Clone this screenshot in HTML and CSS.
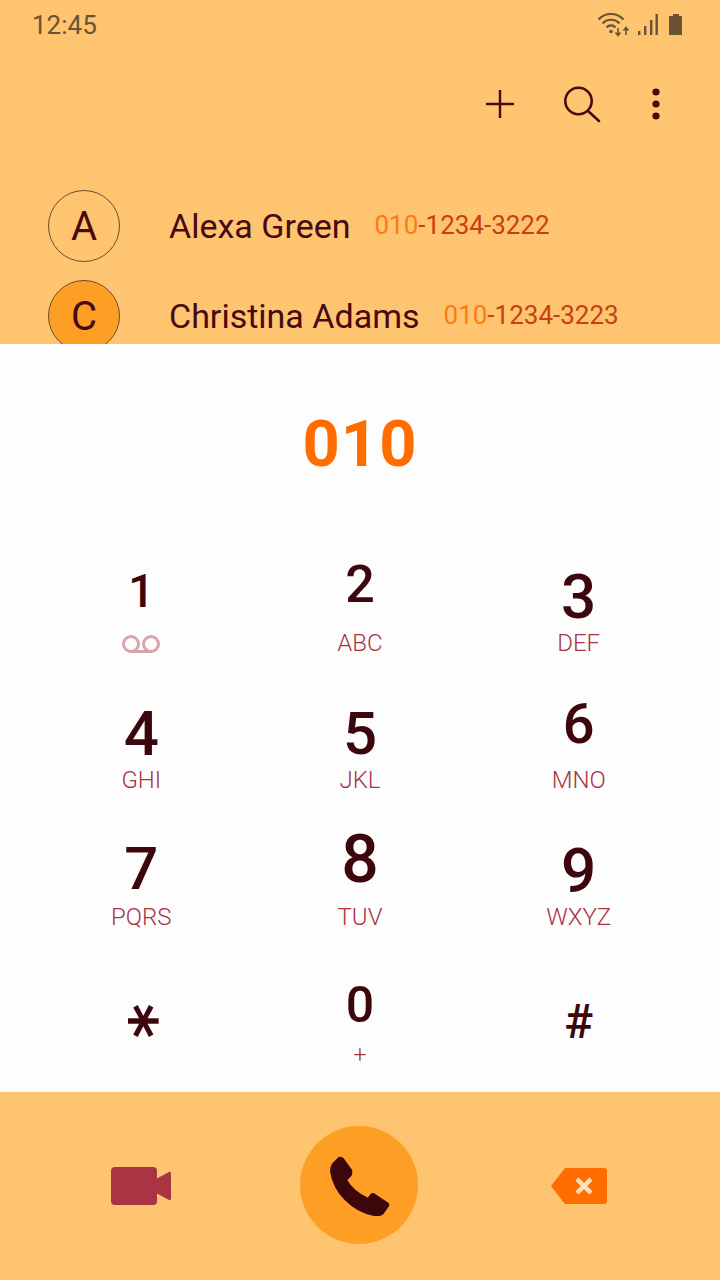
FILE: index.html
```html
<!DOCTYPE html>
<html lang="en">
<head>
    <meta charset="UTF-8">
    <meta name="viewport" content="width=device-width, initial-scale=1.0">
    <title>Phone</title>
    <link rel="stylesheet" href="styles.css">
</head>
<body>

    <div class="top">
        <div class="status-bar">
            <span class="time">12:45</span>
            <svg class="status-icons" width="92" height="28" viewBox="0 0 92 28">
                <g fill="none" stroke="#6b5234" stroke-width="2.2">
                    <path d="M3.5 8.5a17 17 0 0 1 25 0"/>
                    <path d="M7.5 12.5a11.5 11.5 0 0 1 17 0"/>
                    <path d="M11.5 16.5a6 6 0 0 1 9 0"/>
                    <path d="M23 17v7M20.5 21.5l2.5 3 2.5-3" stroke-width="1.6"/>
                    <path d="M31 24v-7M28.5 19.5l2.5-3 2.5 3" stroke-width="1.6"/>
                </g>
                <circle cx="16" cy="20.5" r="1.8" fill="#6b5234"/>
                <g fill="#6b5234">
                    <rect x="43" y="20" width="2.4" height="4"/>
                    <rect x="49" y="15" width="2.4" height="9"/>
                    <rect x="55" y="9" width="2.4" height="15"/>
                    <rect x="60.5" y="3" width="2.4" height="21"/>
                    <path d="M78 3h6v2h3v19H74V5h4z"/>
                </g>
            </svg>
        </div>

        <div class="toolbar">
            <svg class="tool" width="36" height="36" viewBox="0 0 36 36">
                <path d="M18 4v28M4 18h28" fill="none" stroke="#470a10" stroke-width="2.4"/>
            </svg>
            <svg class="tool tool-search" width="40" height="40" viewBox="0 0 40 40">
                <circle cx="16.5" cy="17" r="13.2" fill="none" stroke="#470a10" stroke-width="2.6"/>
                <path d="M26 27L37 37" fill="none" stroke="#470a10" stroke-width="2.6" stroke-linecap="round"/>
            </svg>
            <svg class="tool tool-more" width="12" height="36" viewBox="0 0 12 36">
                <circle cx="6" cy="6" r="3.6" fill="#470a10"/>
                <circle cx="6" cy="18" r="3.6" fill="#470a10"/>
                <circle cx="6" cy="30" r="3.6" fill="#470a10"/>
            </svg>
        </div>

        <div class="contact">
            <div class="avatar">A</div>
            <span class="name">Alexa Green</span>
            <span class="phone"><span class="match">010</span>-1234-3222</span>
        </div>
        <div class="contact">
            <div class="avatar avatar-on">C</div>
            <span class="name">Christina Adams</span>
            <span class="phone"><span class="match">010</span>-1234-3223</span>
        </div>
    </div>

    <div class="panel">
        <div class="dialed">010</div>
        <div class="keypad">
            <div class="key"><div class="num-box"><span class="num n1">1</span></div>
                <svg class="vm" width="38" height="18" viewBox="0 0 38 18">
                    <circle cx="9" cy="9" r="7.5" fill="none" stroke="#d9a3ab" stroke-width="3"/>
                    <circle cx="29" cy="9" r="7.5" fill="none" stroke="#d9a3ab" stroke-width="3"/>
                    <path d="M9 16.5h20" stroke="#d9a3ab" stroke-width="3"/>
                </svg>
            </div>
            <div class="key"><div class="num-box"><span class="num n2">2</span></div><span class="letters">ABC</span></div>
            <div class="key"><div class="num-box"><span class="num n3">3</span></div><span class="letters">DEF</span></div>
            <div class="key"><div class="num-box"><span class="num n4">4</span></div><span class="letters">GHI</span></div>
            <div class="key"><div class="num-box"><span class="num n5">5</span></div><span class="letters">JKL</span></div>
            <div class="key"><div class="num-box"><span class="num n6">6</span></div><span class="letters">MNO</span></div>
            <div class="key"><div class="num-box"><span class="num n7">7</span></div><span class="letters">PQRS</span></div>
            <div class="key"><div class="num-box"><span class="num n8">8</span></div><span class="letters">TUV</span></div>
            <div class="key"><div class="num-box"><span class="num n9">9</span></div><span class="letters">WXYZ</span></div>
            <div class="key"><div class="num-box"><span class="num star">*</span></div></div>
            <div class="key"><div class="num-box"><span class="num n0">0</span></div><span class="letters plus">+</span></div>
            <div class="key"><div class="num-box"><span class="num hash">#</span></div></div>
        </div>
    </div>

    <div class="bottom">
        <svg width="60" height="38" viewBox="0 0 60 38">
            <rect x="0" y="0" width="46" height="38" rx="4" fill="#aa3344"/>
            <path d="M45 12L58 5Q60 4 60 7V31Q60 34 58 33L45 26Z" fill="#aa3344"/>
        </svg>
        <div class="call">
            <svg class="handset" width="60" height="60" viewBox="0 0 60 60">
                <path d="M9 2Q11 1 13 3L21 14Q22 18 20 20L16 24Q23 36 38 43L41 39Q43 37 45 39L57 47Q59 48 58 50L53 57Q50 60 44 59C22 55 4 36 1 15Q1 11 3 8Z" fill="#3d060d" stroke="#3d060d" stroke-width="2" stroke-linejoin="round"/>
            </svg>
        </div>
        <svg width="56" height="36" viewBox="0 0 56 36">
            <path d="M14 0H53q3 0 3 3V33q0 3-3 3H14L0 18Z" fill="#ff6d00"/>
            <path d="M26 11l14 14M40 11L26 25" fill="none" stroke="#ffe3bf" stroke-width="4.5"/>
        </svg>
    </div>

</body>
</html>
```

FILE: styles.css
```css
body { margin: 0; width: 720px; height: 1280px; overflow: hidden; font-family: Roboto, sans-serif; background-color: #fec470; }

.top { height: 344px; overflow: hidden; background-color: #fec470; }

.status-bar { display: flex; justify-content: space-between; align-items: center; height: 50px; padding: 0 33px 0 32px; }
.time { font-size: 26px; color: #6b5234; }
.status-icons { display: block; }

.toolbar { display: flex; justify-content: flex-end; align-items: center; height: 108px; padding: 0 58px 0 0; margin-bottom: 23px; }
.tool { display: block; }
.tool-search { margin-left: 44px; }
.tool-more { margin-left: 48px; }

.contact { display: flex; align-items: center; height: 90px; padding-left: 48px; }
.avatar { flex: none; display: flex; align-items: center; justify-content: center; width: 70px; height: 70px; border: 1px solid #6b4b2e; border-radius: 50%; font-size: 40px; color: #470a10; margin-right: 49px; }
.avatar-on { background-color: #fe9f25; }
.name { font-size: 34px; color: #470a10; margin-right: 24px; }
.phone { font-size: 26px; color: #c93e12; margin-bottom: 2px; }
.match { color: #ff7a10; }

.panel { height: 748px; background-color: #fdfdfd; }
.dialed { height: 196px; padding-top: 65px; box-sizing: border-box; text-align: center; font-size: 65px; line-height: 70px; font-weight: 700; letter-spacing: 1px; color: #ff6d00; }

.keypad { display: grid; grid-template-columns: 1fr 1fr 1fr; grid-template-rows: 137px 137px 137px 141px; padding: 0 32px; }
.key { display: flex; flex-direction: column; align-items: center; }
.num-box { height: 88px; }
.num { display: block; line-height: 1; font-weight: 500; color: #3d060d; }
.letters { font-size: 24px; line-height: 30px; font-weight: 300; color: #aa3344; }
.plus { font-size: 23px; margin-top: 2px; }
.vm { margin-top: 7px; }

.n1 { font-size: 46px; margin-top: 28px; }
.n2 { font-size: 52px; margin-top: 19px; }
.n3 { font-size: 62px; margin-top: 26px; }
.n4 { font-size: 62px; margin-top: 26px; }
.n5 { font-size: 60px; margin-top: 27px; }
.n6 { font-size: 56px; margin-top: 19px; }
.n7 { font-size: 60px; margin-top: 25px; }
.n8 { font-size: 66px; margin-top: 13px; }
.n9 { font-size: 62px; margin-top: 26px; }
.n0 { font-size: 50px; margin-top: 29px; }
.star { font-family: "DejaVu Sans", sans-serif; font-size: 66px; font-weight: 700; margin-top: 37px; transform: translateX(-9px) rotate(90deg); }
.hash { font-size: 48px; margin-top: 47px; }

.bottom { display: grid; grid-template-columns: 1fr 1fr 1fr; align-items: center; justify-items: center; height: 188px; padding: 0 32px; }
.call { display: flex; align-items: center; justify-content: center; width: 118px; height: 118px; border-radius: 50%; background-color: #fe9f25; margin: -2px 2px 0 0; }
.handset { margin: 2px 0 0 2px; }
```
